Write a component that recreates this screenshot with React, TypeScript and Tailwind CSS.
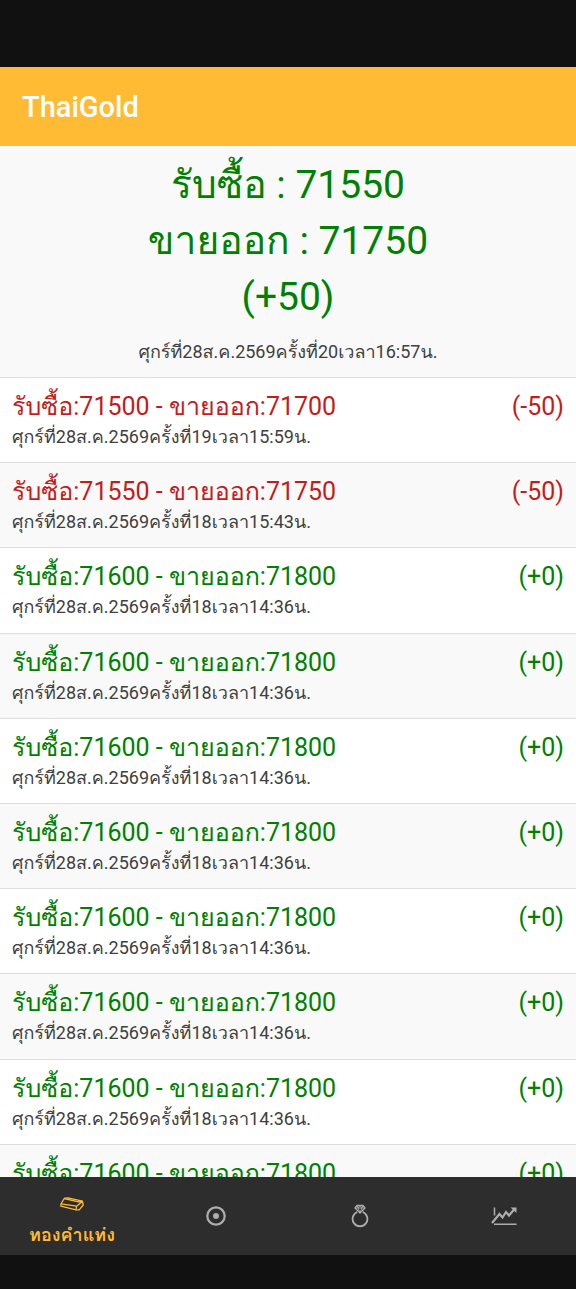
import React from 'react';
import clsx from 'clsx';

type Price = {
  buy: number;
  sell: number;
  change: number;
  date: string;
};

const latest: Price = {
  buy: 71550,
  sell: 71750,
  change: 50,
  date: 'ศุกร์ที่28ส.ค.2569ครั้งที่20เวลา16:57น.',
};

const repeated: Price = {
  buy: 71600,
  sell: 71800,
  change: 0,
  date: 'ศุกร์ที่28ส.ค.2569ครั้งที่18เวลา14:36น.',
};

const history: Price[] = [
  { buy: 71500, sell: 71700, change: -50, date: 'ศุกร์ที่28ส.ค.2569ครั้งที่19เวลา15:59น.' },
  { buy: 71550, sell: 71750, change: -50, date: 'ศุกร์ที่28ส.ค.2569ครั้งที่18เวลา15:43น.' },
  ...Array.from({ length: 8 }, () => repeated),
];

const formatChange = (change: number) => `(${change < 0 ? '' : '+'}${change})`;
const changeColor = (change: number) => (change < 0 ? 'text-[#c41c1c]' : 'text-[#008000]');

const GoldBarIcon = () => (
  <svg viewBox="0 0 24 14" className="h-[14px] w-6" fill="none" stroke="currentColor" strokeWidth="1.3" strokeLinejoin="round" aria-hidden="true">
    <path d="M4.2 1.5 8 .8 22.4 4.2 23.2 8 19.2 12.8H16L.9 9.2V7Z" />
    <path d="M1.2 6.8 16.6 9.2 22.2 4.4M16.6 9.2 16 12.6M4.2 1.5 18.5 4.8 22.4 4.2" />
  </svg>
);

const CoinIcon = () => (
  <svg viewBox="0 0 20 20" className="size-5" fill="none" aria-hidden="true">
    <circle cx="10" cy="10" r="8.7" stroke="currentColor" strokeWidth="2.2" />
    <circle cx="10" cy="10" r="3" fill="currentColor" />
  </svg>
);

const RingIcon = () => (
  <svg viewBox="0 0 18 24" className="h-6 w-[18px]" fill="none" stroke="currentColor" aria-hidden="true">
    <path d="M6.2 8a7.4 7.4 0 1 0 5.6 0" strokeWidth="1.8" />
    <path d="M6 1.5h6l2 2.5-5 5-5-5Z" strokeWidth="1.3" strokeLinejoin="round" />
    <path d="M4 4h10M6 1.5 7.2 4 9 9l1.8-5L12 1.5M7.2 4 9 1.5 10.8 4" strokeWidth="0.9" />
  </svg>
);

const ChartIcon = () => (
  <svg viewBox="0 0 26 20" className="h-5 w-[26px]" fill="none" stroke="currentColor" aria-hidden="true">
    <path d="M3.5 1.5v8M3 18.2h22.5" strokeWidth="1.5" />
    <path d="M1 17 8.5 8l3 3.5L15 6l3 3.5 5-6" strokeWidth="2.2" />
    <path d="M19.5 1.5H25.5V7Z" fill="currentColor" stroke="none" />
  </svg>
);

const PriceRow = ({ price }: { price: Price }) => (
  <li className="border-t border-[#dedede] px-3 pt-3 odd:bg-white even:bg-[#f9f9f9]">
    <div className={clsx('flex justify-between text-[25px] leading-[34px]', changeColor(price.change))}>
      <span>{`รับซื้อ:${price.buy} - ขายออก:${price.sell}`}</span>
      <span>{formatChange(price.change)}</span>
    </div>
    <p className="text-[18px] leading-[26px] text-[#404040]">{price.date}</p>
  </li>
);

const tabs = [
  { name: 'ทองคำแท่ง', icon: <GoldBarIcon />, active: true },
  { name: 'ทองรูปพรรณ', icon: <CoinIcon /> },
  { name: 'แหวน', icon: <RingIcon /> },
  { name: 'กราฟ', icon: <ChartIcon /> },
];

const App = () => {
  return (
    <div className="flex h-screen flex-col overflow-hidden bg-[#111111] pt-[67px] pb-[34px] font-['Roboto','Loma','Noto_Sans_Thai','Noto_Sans',sans-serif]">
      <header className="flex h-[79px] shrink-0 items-center bg-[#ffbb33] px-[22px] pt-0.5">
        <h1 className="text-[29px] font-medium text-white">ThaiGold</h1>
      </header>

      <main className="flex min-h-0 flex-1 flex-col overflow-hidden bg-white">
        {/* Latest price */}
        <section className="shrink-0 bg-[#f9f9f9] pt-[11px] pb-3 text-center">
          <div className={clsx('text-[39px] leading-[56px]', changeColor(latest.change))}>
            <p>{`รับซื้อ : ${latest.buy}`}</p>
            <p>{`ขายออก : ${latest.sell}`}</p>
            <p>{formatChange(latest.change)}</p>
          </div>
          <p className="mt-[14px] text-[18px] leading-[26px] text-[#404040]">{latest.date}</p>
        </section>

        {/* Earlier prices */}
        <ul className="grid h-[852px] shrink-0 auto-rows-fr">
          {history.map((price, i) => (
            <PriceRow key={i} price={price} />
          ))}
        </ul>
      </main>

      <nav className="grid h-[78px] shrink-0 grid-cols-4 bg-[#2d2d2d]">
        {tabs.map((tab) => (
          <button
            key={tab.name}
            type="button"
            aria-label={tab.name}
            className={clsx(
              'flex flex-col items-center justify-center gap-3',
              tab.active ? 'pt-3 text-[#ffbb33]' : 'text-[#adadad]'
            )}>
            {tab.icon}
            {tab.active && <span className="text-[18px] leading-6 font-bold">{tab.name}</span>}
          </button>
        ))}
      </nav>
    </div>
  );
};

export default App;
